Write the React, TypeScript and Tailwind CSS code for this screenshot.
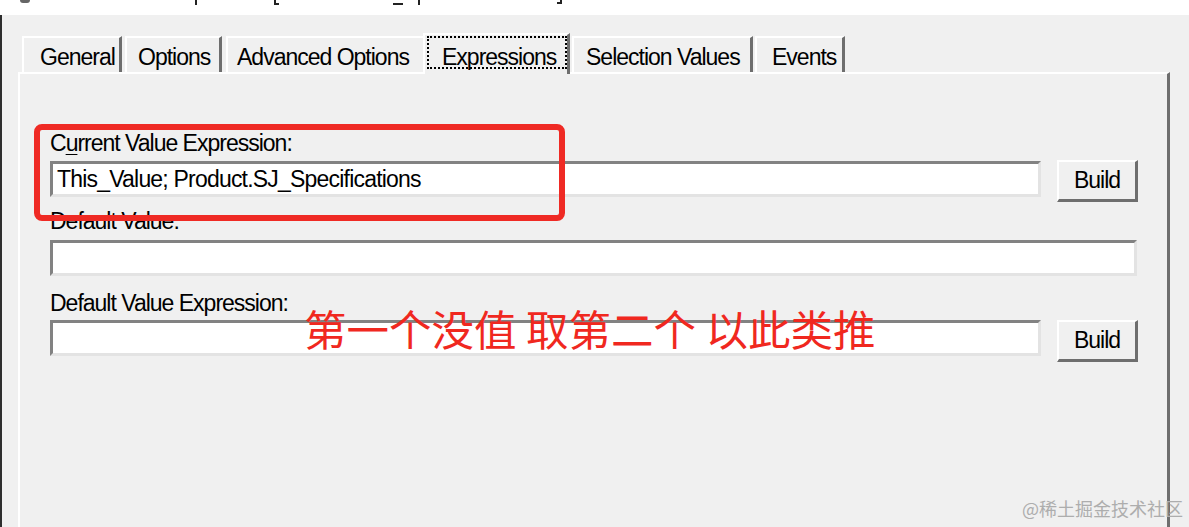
import React from 'react';

const tabs = [
  { label: 'General', ml: 'ml-0', w: 'w-[100px]', pl: 'pl-[16px]', border: 'border-r-[3px]' },
  { label: 'Options', ml: 'ml-[3px]', w: 'w-[97px]', pl: 'pl-[11px]', border: 'border-r-[3px]' },
  { label: 'Advanced Options', ml: 'ml-[4px]', w: 'w-[197px]', pl: 'pl-[9px]', border: 'border-r-0' },
];

const tabsAfter = [
  { label: 'Selection Values', ml: 'ml-[2px]', w: 'w-[181px]', pl: 'pl-[12px]' },
  { label: 'Events', ml: 'ml-[2px]', w: 'w-[90px]', pl: 'pl-[15px]' },
];

function Field({ className }: { className: string }) {
  return (
    <div
      className={`h-[36px] bg-white border-t-[3px] border-l-[3px] border-b-[3px] border-r-[3px] border-t-[#828282] border-l-[#828282] border-b-[#e3e3e3] border-r-[#e3e3e3] ${className}`}
    />
  );
}

function BuildButton() {
  return (
    <button className="ml-[16px] w-[81px] h-[42px] -mt-[1px] flex items-center justify-center bg-[#f0f0f0] border-t-2 border-l-2 border-t-white border-l-white border-b-[3px] border-r-[3px] border-b-[#6e6e6e] border-r-[#6e6e6e] text-[23px] leading-[23px] tracking-[-1px]">
      Build
    </button>
  );
}

export default function App() {
  return (
    <div className="relative w-[1189px] h-[527px] overflow-hidden bg-[#f0f0f0] text-black font-['Liberation_Sans','Arial',sans-serif]">
      {/* clipped title bar */}
      <div className="h-[15px] bg-white flex items-start">
        <div className="ml-[20px] w-[10px] h-[3px] bg-[#666] rounded-b-sm" />
        <div className="ml-[165px] w-[2px] h-[5px] bg-[#222]" />
        <div className="ml-[77px] w-[5px] h-[5px] border-l-2 border-b-2 border-[#222]" />
        <div className="ml-[114px] mt-[3px] w-[10px] h-[2px] bg-[#222]" />
        <div className="ml-[15px] w-[2px] h-[5px] bg-[#222]" />
        <div className="ml-[137px] w-[5px] h-[4px] border-r-2 border-b-2 border-[#222]" />
      </div>

      <div className="flex h-[512px]">
        <div className="w-[2px] bg-[#2e2e2e]" />
        <div className="flex-1 pl-[16px] pt-[18px] flex flex-col">
          {/* tab strip */}
          <div className="flex items-end h-[39px] pl-[4px] text-[23px] leading-[23px] tracking-[-1px]">
            {tabs.map((t) => (
              <div
                key={t.label}
                className={`${t.ml} ${t.w} ${t.pl} ${t.border} h-[36px] pt-[8px] border-t-2 border-l-2 border-t-white border-l-white border-r-[#6e6e6e] whitespace-nowrap`}
              >
                {t.label}
              </div>
            ))}
            <div className="relative z-10 w-[147px] h-[41px] -mb-[2px] bg-[#f0f0f0] border-t-2 border-l-2 border-t-white border-l-white border-r-[3px] border-r-[#6e6e6e] pt-[1px] pl-[2px]">
              <div className="h-[33px] border-2 border-dotted border-black pl-[13px] pt-[8px] whitespace-nowrap">
                Expressions
              </div>
            </div>
            {tabsAfter.map((t) => (
              <div
                key={t.label}
                className={`${t.ml} ${t.w} ${t.pl} h-[36px] pt-[8px] border-t-2 border-l-2 border-t-white border-l-white border-r-[3px] border-r-[#6e6e6e] whitespace-nowrap`}
              >
                {t.label}
              </div>
            ))}
          </div>

          {/* tab pane */}
          <div className="w-[1152px] flex-1 border-t-2 border-l-2 border-t-white border-l-white border-r-[3px] border-r-[#6e6e6e] pl-[30px] pt-[58px] text-[23px] leading-[23px] tracking-[-1px]">
            <div>
              C<span className="underline underline-offset-[3px] decoration-1">u</span>rrent Value Expression:
            </div>
            <div className="flex items-start mt-[6px]">
              <div className="w-[991px] h-[36px] bg-white border-t-[3px] border-l-[3px] border-b-[3px] border-r-[3px] border-t-[#828282] border-l-[#828282] border-b-[#e3e3e3] border-r-[#e3e3e3] flex items-center pl-[4px] tracking-[-0.8px]">
                This_Value; Product.SJ_Specifications
              </div>
              <BuildButton />
            </div>

            <div className="mt-[8px]">Default Value:</div>
            <Field className="mt-[7px] w-[1087px]" />

            <div className="mt-[16px]">Default Value Expression:</div>
            <div className="flex items-start mt-[5px]">
              <Field className="w-[991px]" />
              <div className="mt-[1px]">
                <BuildButton />
              </div>
            </div>
          </div>
        </div>
      </div>

      {/* red annotation */}
      <div className="absolute left-[34px] top-[124px] w-[531px] h-[97px] border-[6px] border-[#ef2a24] rounded-[8px]" />
      <div className="absolute left-[304px] top-[307px] text-[42.5px] leading-[42px] text-[#f0281f] whitespace-nowrap font-['Noto_Sans_CJK_SC',sans-serif]">
        第一个没值 取第二个 以此类推
      </div>

      {/* watermark */}
      <div className="absolute left-[1022px] top-[499px] text-[18px] leading-[18px] text-[#adadad] whitespace-nowrap font-['Noto_Sans_CJK_SC',sans-serif]">
        @稀土掘金技术社区
      </div>
    </div>
  );
}
